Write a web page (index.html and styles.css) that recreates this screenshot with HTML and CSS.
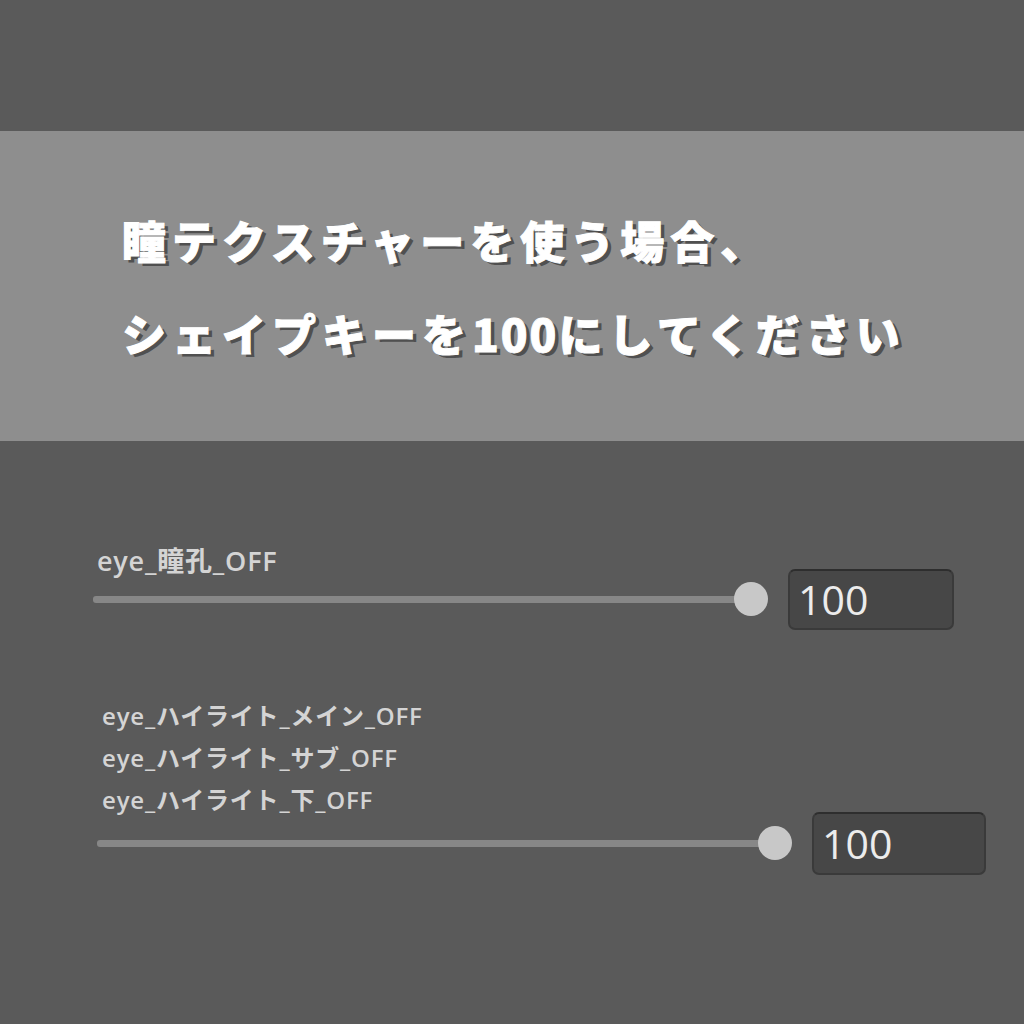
FILE: index.html
```html
<!DOCTYPE html>
<html lang="ja">
<head>
    <meta charset="UTF-8">
    <title>瞳テクスチャー設定</title>
    <link rel="stylesheet" href="styles.css">
</head>
<body>
    <div class="top-band"></div>

    <div class="notice">
        <p>瞳テクスチャーを使う場合、</p>
        <p>シェイプキーを<span class="num">100</span>にしてください</p>
    </div>

    <div class="panel">
        <div class="param param-first">
            <div class="labels">
                <div class="label">eye_瞳孔_OFF</div>
            </div>
            <div class="control">
                <div class="track"><div class="thumb"></div></div>
                <div class="value">100</div>
            </div>
        </div>

        <div class="param param-second">
            <div class="labels">
                <div class="label">eye_ハイライト_メイン_OFF</div>
                <div class="label">eye_ハイライト_サブ_OFF</div>
                <div class="label">eye_ハイライト_下_OFF</div>
            </div>
            <div class="control">
                <div class="track"><div class="thumb"></div></div>
                <div class="value">100</div>
            </div>
        </div>
    </div>
</body>
</html>
```

FILE: styles.css
```css
body {
    margin: 0;
    background: #5a5a5a;
    font-family: "Noto Sans CJK JP", sans-serif;
}
.top-band {
    height: 131px;
    background: #5a5a5a;
}
.notice {
    height: 310px;
    box-sizing: border-box;
    background: #8e8e8e;
    padding: 85px 0 0 122px;
}
.notice p {
    margin: 0 0 45px;
    color: #ffffff;
    font-size: 44px;
    font-weight: 900;
    line-height: 48px;
    letter-spacing: 6px;
    -webkit-text-stroke: 1px #ffffff;
    text-shadow: 4px 3px 0 #505050;
}
.notice .num {
    letter-spacing: 2px;
}
.panel {
    padding-top: 99px;
}
.param {
    padding-right: 38px;
}
.param-first {
    padding-left: 93px;
}
.param-second {
    padding-left: 97px;
    margin-top: 65px;
}
.labels {
    padding-left: 4px;
}
.param-second .labels {
    padding-left: 5px;
}
.label {
    color: #d4d4d4;
    font-family: "Open Sans", "Noto Sans CJK JP", sans-serif;
    font-size: 24px;
    font-weight: 600;
    letter-spacing: 0.8px;
    line-height: 42px;
    height: 42px;
}
.param-first .label {
    font-size: 27px;
}
.control {
    display: flex;
    align-items: center;
    gap: 19px;
}
.param-first .control {
    margin-top: -13px;
    margin-right: 32px;
}
.param-second .control {
    margin-top: -9px;
}
.track {
    flex: 1;
    height: 7px;
    background: #878787;
    border-radius: 3px;
    position: relative;
}
.thumb {
    position: absolute;
    right: -17px;
    top: -14px;
    width: 34px;
    height: 34px;
    border-radius: 50%;
    background: #c8c8c8;
}
.value {
    width: 166px;
    height: 61px;
    box-sizing: border-box;
    background: #474747;
    border: 2px solid #3a3a3a;
    border-top-color: #2e2e2e;
    border-radius: 7px;
    color: #ececec;
    font-family: "Open Sans", sans-serif;
    font-size: 41px;
    line-height: 56px;
    padding-left: 8px;
    margin-left: 18px;
}
.param-second .value {
    width: 174px;
    height: 63px;
    line-height: 58px;
}
```
